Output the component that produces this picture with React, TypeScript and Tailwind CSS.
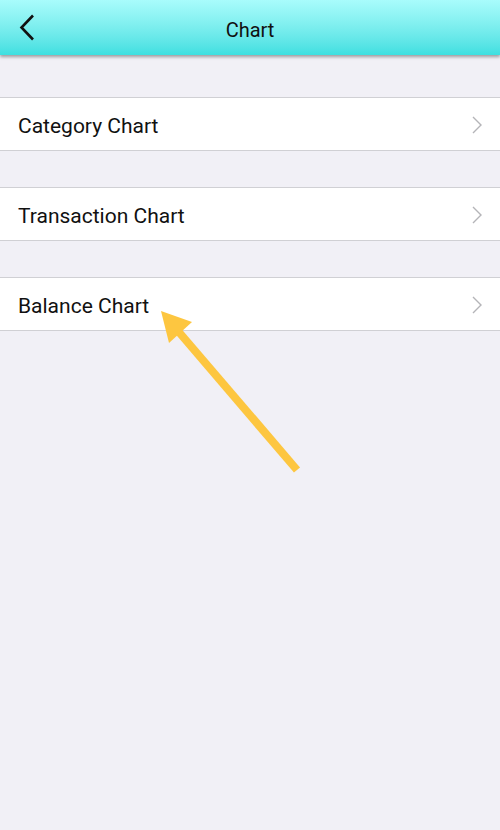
import React from "react";

function Row({ label }: { label: string }) {
  return (
    <div className="flex h-[54px] items-center justify-between border-y border-[#d0d0d4] bg-white pl-[18px] pr-[18px]">
      <span className="pt-[4px] text-[21px] leading-none text-[#111]">{label}</span>
      <svg width="10" height="18" viewBox="0 0 10 18" className="mt-[2px]">
        <path d="M1 1 L9 9 L1 17" fill="none" stroke="#b4b4b8" strokeWidth="1.4" />
      </svg>
    </div>
  );
}

export default function App() {
  return (
    <div
      className="relative h-[830px] w-[500px] overflow-hidden bg-[#f1f0f6]"
      style={{ fontFamily: "Roboto, 'Noto Sans', sans-serif" }}
    >
      <div className="relative z-10 flex h-[55px] items-center justify-center bg-gradient-to-b from-[#a8fcfc] to-[#3ddfe0] shadow-[0_2px_3px_rgba(0,0,0,0.35)]">
        <svg width="16" height="28" viewBox="0 0 16 28" className="absolute left-[19px] top-[14px]">
          <path d="M14 1.5 L2.5 13.5 L14 25.5" fill="none" stroke="#111" strokeWidth="2.6" />
        </svg>
        <span className="pt-[4px] text-[20px] leading-none text-[#111]">Chart</span>
      </div>
      <div className="flex flex-col pt-[42px] gap-[36px]">
        <Row label="Category Chart" />
        <Row label="Transaction Chart" />
        <Row label="Balance Chart" />
      </div>
      <svg
        className="absolute left-0 top-0"
        width="500"
        height="830"
        viewBox="0 0 500 830"
      >
        <line x1="297" y1="470" x2="178" y2="331" stroke="#fdc640" strokeWidth="8" />
        <polygon points="161,311 169,343 192,322" fill="#fdc640" />
      </svg>
    </div>
  );
}
